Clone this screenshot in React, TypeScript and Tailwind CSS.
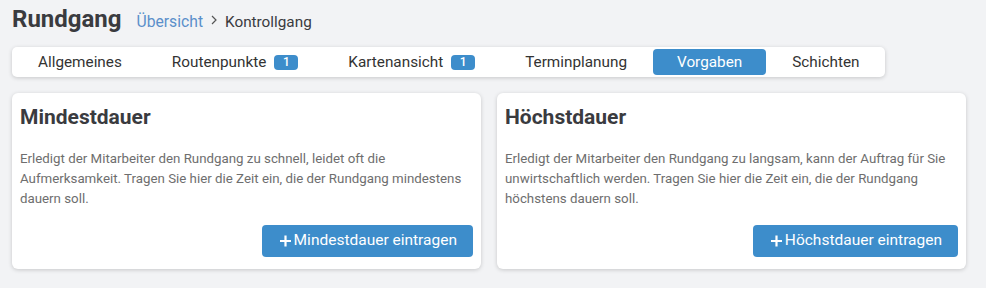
import React from "react";

const tabs = [
    { label: "Allgemeines" },
    { label: "Routenpunkte", badge: 1 },
    { label: "Kartenansicht", badge: 1 },
    { label: "Terminplanung" },
    { label: "Vorgaben", active: true },
    { label: "Schichten" },
];

const cards = [
    {
        title: "Mindestdauer",
        text: "Erledigt der Mitarbeiter den Rundgang zu schnell, leidet oft die Aufmerksamkeit. Tragen Sie hier die Zeit ein, die der Rundgang mindestens dauern soll.",
        button: "Mindestdauer eintragen",
    },
    {
        title: "Höchstdauer",
        text: "Erledigt der Mitarbeiter den Rundgang zu langsam, kann der Auftrag für Sie unwirtschaftlich werden. Tragen Sie hier die Zeit ein, die der Rundgang höchstens dauern soll.",
        button: "Höchstdauer eintragen",
    },
];

const App: React.FC = () => {
    return (
        <div
            className="w-full h-[288px] bg-[#f2f3f5] pl-3 pr-5 pt-[4px]"
            style={{ fontFamily: "Roboto, 'Noto Sans', sans-serif" }}
        >
            {/* header */}
            <div className="flex items-baseline h-[30px]">
                <h1 className="text-[24px] font-bold text-[#3a3b3f] leading-[30px]">Rundgang</h1>
                <a className="ml-[15px] text-[15.7px] text-[#5b8fca]">Übersicht</a>
                <svg className="mx-[7px] w-[8px] h-[10px] self-center mt-[2px]" viewBox="0 0 8 10">
                    <path d="M2 1 L6 5 L2 9" fill="none" stroke="#555" strokeWidth="1.2" />
                </svg>
                <span className="text-[15.3px] text-[#3a3b3f]">Kontrollgang</span>
            </div>

            {/* tabs */}
            <div className="mt-[13px] w-[873px] h-[30px] bg-white rounded-[5px] shadow-[0_1px_4px_rgba(0,0,0,0.18)] flex items-start gap-[2px] px-[2px] pt-[2px]">
                {tabs.map((t) => (
                    <div
                        key={t.label}
                        className={
                            t.active
                                ? "h-[26px] px-[24px] rounded-[4px] bg-[#3d8dcb] text-white text-[15.3px] flex items-center"
                                : "h-[26px] px-[24px] text-[#333] text-[15.3px] flex items-center"
                        }
                    >
                        {t.label}
                        {t.badge !== undefined && (
                            <span className="ml-[8px] h-[15px] w-[24px] rounded-[4px] bg-[#3d8dcb] text-white text-[12px] leading-[15px] text-center font-medium">
                                {t.badge}
                            </span>
                        )}
                    </div>
                ))}
            </div>

            {/* cards */}
            <div className="mt-[16px] grid grid-cols-2 gap-4">
                {cards.map((c) => (
                    <div
                        key={c.title}
                        className="bg-white rounded-[6px] shadow-[0_1px_4px_rgba(0,0,0,0.18)] px-[8px] pt-[10px] pb-[12px] flex flex-col"
                    >
                        <h2 className="text-[21px] font-bold leading-[28px] text-[#3a3b3f]">{c.title}</h2>
                        <p className="mt-[18px] text-[13.3px] leading-[20px] text-[#6e6e6e]">{c.text}</p>
                        <div className="mt-[16px] flex justify-end">
                            <button className="h-[32px] pl-[18px] pr-[16px] rounded-[4px] bg-[#3d8dcb] text-white text-[15.5px] flex items-center gap-[3px]">
                                <svg className="w-[11px] h-[12px]" viewBox="0 0 11 12">
                                    <path d="M5.5 0.5 V11.5 M0 6 H11" stroke="white" strokeWidth="2.2" />
                                </svg>
                                {c.button}
                            </button>
                        </div>
                    </div>
                ))}
            </div>
        </div>
    );
};

export default App;
